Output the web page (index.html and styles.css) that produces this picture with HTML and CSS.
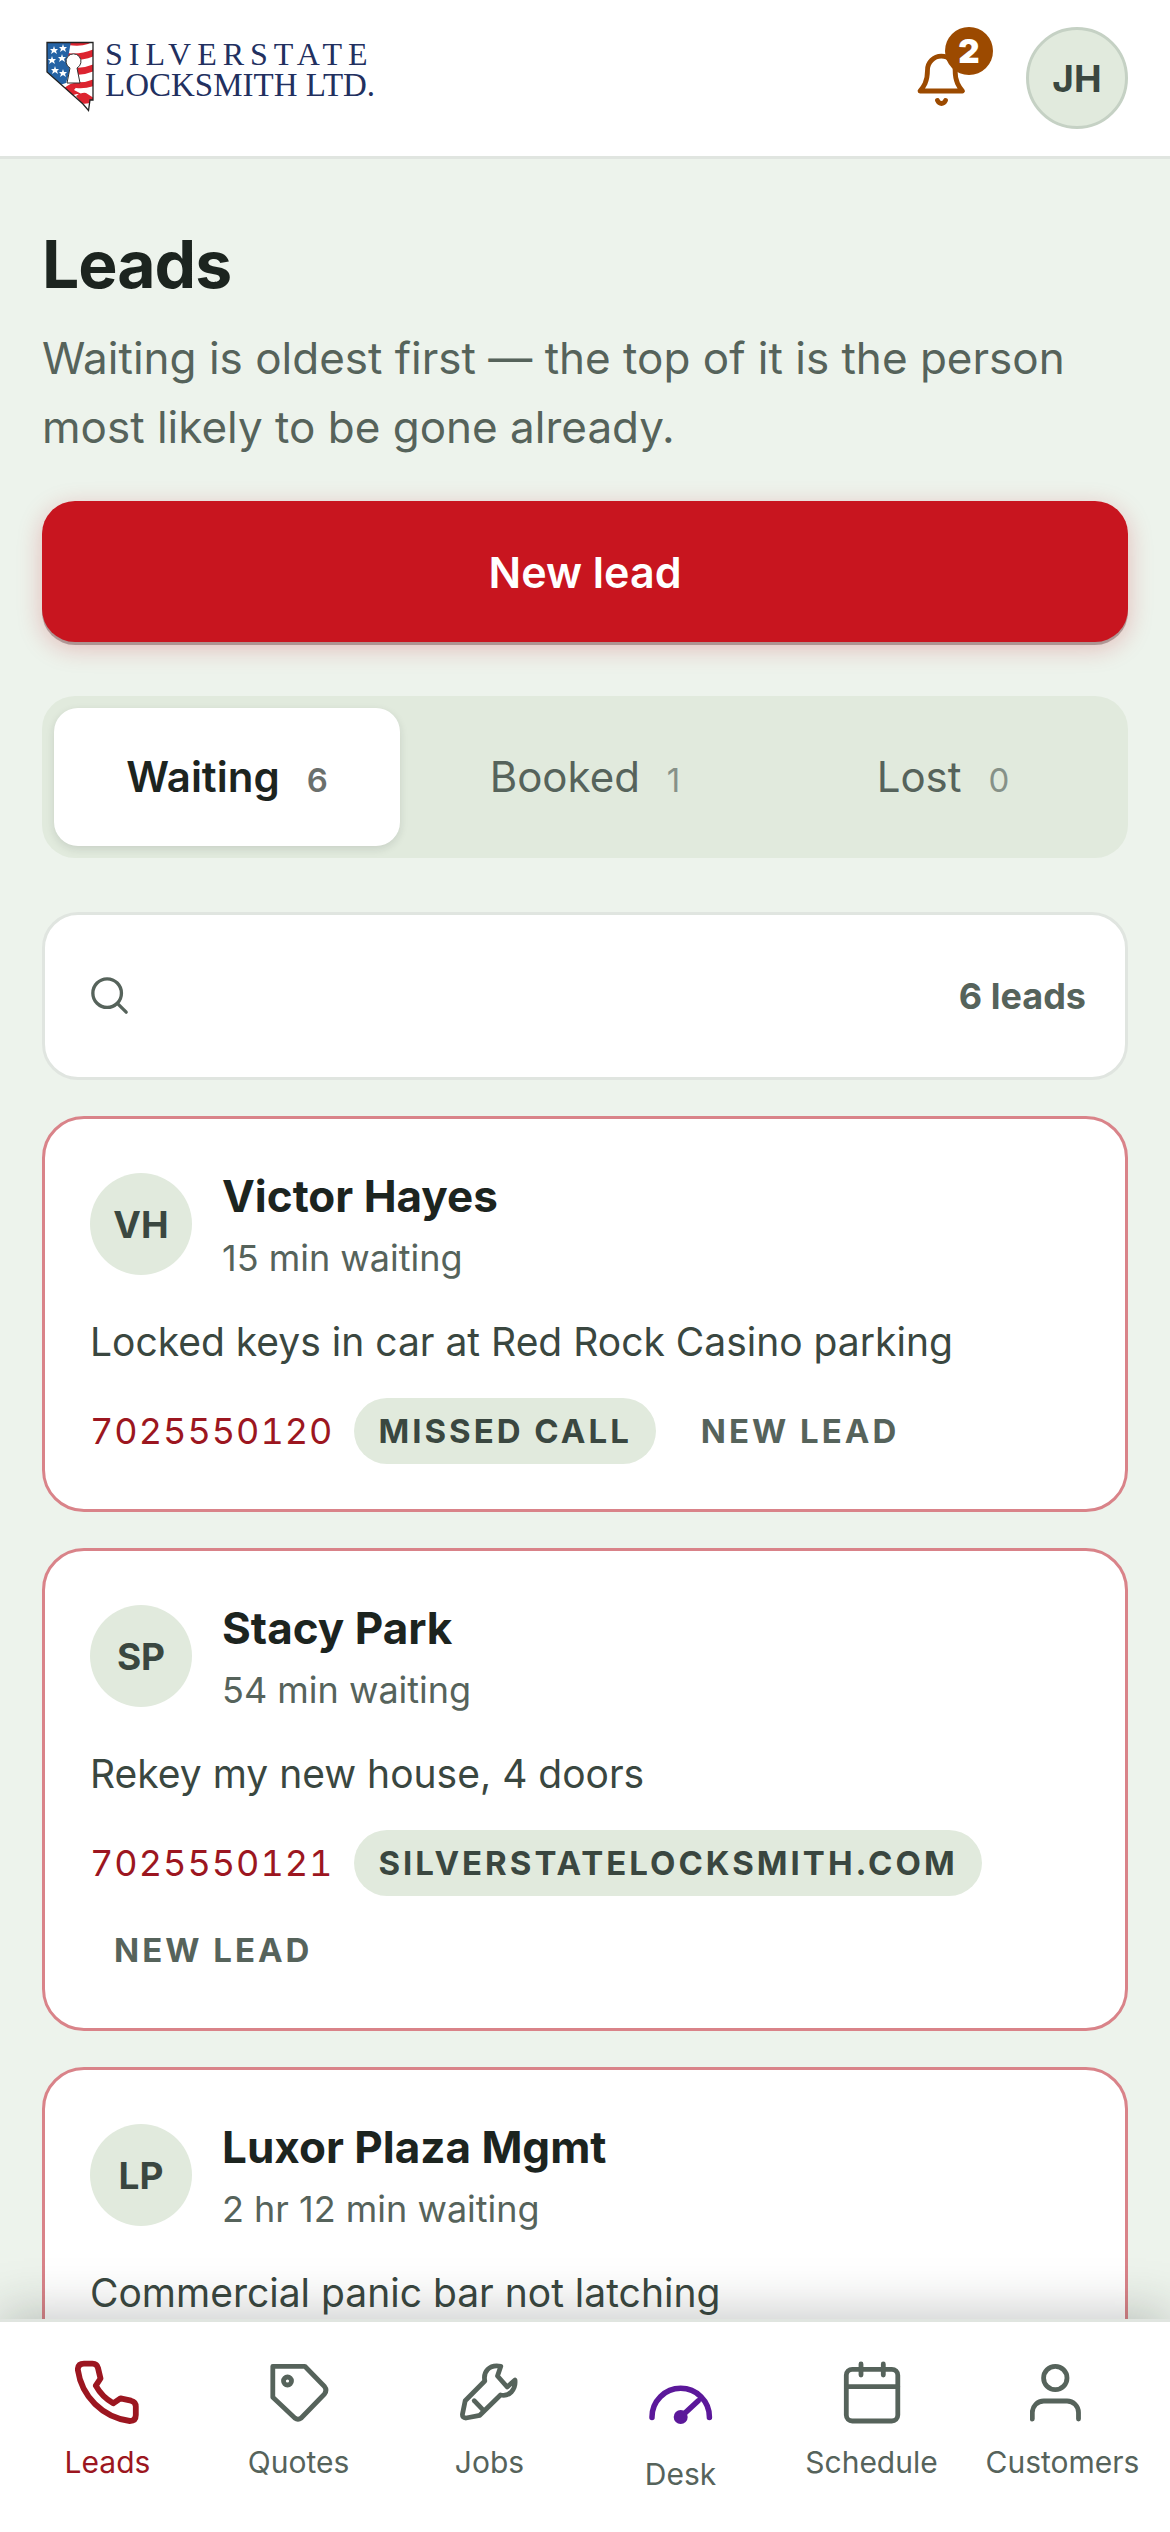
FILE: index.html
```html
<!DOCTYPE html>
<html lang="en">
<head>
  <meta charset="UTF-8">
  <meta name="viewport" content="width=device-width, initial-scale=1.0">
  <title>Leads</title>
  <link rel="stylesheet" href="styles.css">
</head>
<body>
  <header class="topbar">
    <a href="#" class="brand" aria-label="Silverstate Locksmith Ltd.">
      <svg class="brand-logo" viewBox="0 0 340 84">
        <defs>
          <clipPath id="state">
            <path d="M5 6.500H51V64H48L46.500 74.500L41 68L5 36Z"/>
          </clipPath>
        </defs>
        <g clip-path="url(#state)">
          <path fill="#fff" d="M0 0h60v80H0z"/>
          <path fill="#dc2430" d="M28 6h22l-4 2q-8 3-20 1zM26 17q12 2 26-4v7q-12 5-26 4zM34 32q9 0 18-4v7q-9 4-18 4zM34 46q9 1 18-3v7q-9 3-18 2zM21 53q10-8 17-6l-6 7 19 10v3l-9-2q-2-7-7-7l-8 2zM34 60q6-4 10-3l8 5v3q-8 4-13 2z"/>
          <path fill="#2563a5" d="M4 5h25l-2 12-2 7 3 10-4 13-6 2L4 36z"/>
          <g fill="#fff">
            <path d="M12 10l1 3 3 0-2 2 1 3-3-2-3 2 1-3-2-2 3 0z"/>
            <path d="M21 8l1 3 3 0-2 2 1 3-3-2-3 2 1-3-2-2 3 0z"/>
            <path d="M10 20l1 3 3 0-2 2 1 3-3-2-3 2 1-3-2-2 3 0z"/>
            <path d="M20 18l1 3 3 0-2 2 1 3-3-2-3 2 1-3-2-2 3 0z"/>
            <path d="M13 30l1 3 3 0-2 2 1 3-3-2-3 2 1-3-2-2 3 0z"/>
            <path d="M21 33l1 3 3 0-2 2 1 3-3-2-3 2 1-3-2-2 3 0z"/>
          </g>
        </g>
        <path fill="#fff" stroke="#333" d="M28 32a7.500 7.500 0 1 1 7 0L38 47H25Z"/>
        <path fill="none" stroke="#222" stroke-width="1.300" d="M5 6.500H51V64H48L46.500 74.500L41 68L5 36Z"/>
        <text class="logo-line logo-wide" x="63" y="29">SILVERSTATE</text>
        <text class="logo-line" x="63" y="60">LOCKSMITH LTD.</text>
      </svg>
    </a>
    <div class="topbar-actions">
      <button class="bell" aria-label="Notifications">
        <svg class="icon" viewBox="0 0 66 66">
          <path d="M19.500 25a13.800 13.800 0 0 1 27.600 0c0 12 4 17 7.400 21H12c3.500-4 7.500-9 7.500-21z"/>
          <path d="M29.500 55.500c2 4 6 4 8 0"/>
        </svg>
        <span class="bell-count">2</span>
      </button>
      <button class="avatar avatar-me">JH</button>
    </div>
  </header>

  <main class="content">
    <h1>Leads</h1>
    <p class="lede">Waiting is oldest first — the top of it is the person most likely to be gone already.</p>
    <button class="new-lead">New lead</button>

    <div class="tabs" role="tablist">
      <button class="tab active" role="tab" aria-selected="true">Waiting <span class="count">6</span></button>
      <button class="tab" role="tab">Booked <span class="count">1</span></button>
      <button class="tab" role="tab">Lost <span class="count">0</span></button>
    </div>

    <label class="search">
      <svg class="search-icon" viewBox="0 0 42 42">
        <circle cx="18" cy="18" r="15"/>
        <path d="M29 29l9 9"/>
      </svg>
      <input type="search" aria-label="Search leads">
      <span class="search-total">6 leads</span>
    </label>

    <article class="card">
      <div class="card-head">
        <span class="avatar">VH</span>
        <div>
          <h2>Victor Hayes</h2>
          <p class="waiting">15 min waiting</p>
        </div>
      </div>
      <p class="message">Locked keys in car at Red Rock Casino parking</p>
      <div class="meta">
        <a class="phone" href="tel:7025550120">7025550120</a>
        <span class="pill">Missed call</span>
        <span class="pill pill-plain">New lead</span>
      </div>
    </article>

    <article class="card">
      <div class="card-head">
        <span class="avatar">SP</span>
        <div>
          <h2>Stacy Park</h2>
          <p class="waiting">54 min waiting</p>
        </div>
      </div>
      <p class="message">Rekey my new house, 4 doors</p>
      <div class="meta">
        <a class="phone" href="tel:7025550121">7025550121</a>
        <span class="pill">silverstatelocksmith.com</span>
        <span class="pill pill-plain">New lead</span>
      </div>
    </article>

    <article class="card">
      <div class="card-head">
        <span class="avatar">LP</span>
        <div>
          <h2>Luxor Plaza Mgmt</h2>
          <p class="waiting">2 hr 12 min waiting</p>
        </div>
      </div>
      <p class="message">Commercial panic bar not latching</p>
    </article>
  </main>

  <nav class="bottom-nav">
    <a href="#" class="nav-item current">
      <svg class="icon" viewBox="0 0 66 66">
        <path d="M9 3.700H17.500Q22 3.700 23 8L25.500 18.500L20.800 25.700Q27 37 38.200 43.300L45.500 38.300L56 40.700Q60.800 42 60.800 46.500V55Q60.800 61 54.800 61A60 60 0 0 1 2.800 9.700Q3 3.700 9 3.700Z"/>
      </svg>
      Leads
    </a>
    <a href="#" class="nav-item">
      <svg class="icon" viewBox="0 0 66 66">
        <path d="M6.800 6.300H38.800L58.500 26.500Q61.500 30.300 58.500 34L35.200 58Q32 60.500 28.800 58L6.800 37.300Z"/>
        <circle cx="21.500" cy="21" r="4"/>
      </svg>
      Quotes
    </a>
    <a href="#" class="nav-item">
      <svg class="icon" viewBox="0 0 66 66">
        <path d="M27.800 21C26 12 32 4 43.800 6.300L40.500 16L50.200 27L58 20C59 30 52 37 43.500 35L22.800 55.300L9 58Q5 58 5.500 54L8.200 40.700Z"/>
        <path d="M17.200 40.700L25.500 49.300"/>
      </svg>
      Jobs
    </a>
    <a href="#" class="nav-item">
      <svg class="icon icon-desk" viewBox="0 0 78 78">
        <path d="M10 57.500V57a28.700 28.700 0 0 1 57.400 0v.5M38.700 57L56 41"/>
        <circle class="hub" cx="38.700" cy="57" r="7"/>
      </svg>
      Desk
    </a>
    <a href="#" class="nav-item">
      <svg class="icon" viewBox="0 0 66 66">
        <rect x="7.300" y="9.300" width="51.500" height="51.700" rx="6"/>
        <path d="M7.300 26.700H58.800M22 4V15M44.300 4V15"/>
      </svg>
      Schedule
    </a>
    <a href="#" class="nav-item">
      <svg class="icon" viewBox="0 0 66 66">
        <circle cx="25.300" cy="18" r="11.700"/>
        <path d="M2.300 59V52.500a11.500 11.500 0 0 1 11.500-11.500H37a11.500 11.500 0 0 1 11.500 11.500V59"/>
      </svg>
      Customers
    </a>
  </nav>
</body>
</html>
```
FILE: styles.css
```css
* {
  box-sizing: border-box;
}

body {
  margin: 0;
  height: 100vh;
  display: flex;
  flex-direction: column;
  font-family: Inter, "Liberation Sans", sans-serif;
  background-color: #edf3ec;
  color: #1c241f;
}

h1, h2, p {
  margin: 0;
}

button, input {
  font: inherit;
  color: inherit;
  border: none;
  padding: 0;
}

button {
  cursor: pointer;
}

a {
  text-decoration: none;
}

/* Header */
.topbar {
  flex: none;
  display: flex;
  justify-content: space-between;
  align-items: center;
  padding: 27px 42px;
  background-color: #fff;
  border-bottom: 3px solid #e0e5e0;
}

.brand-logo {
  display: block;
  width: 340px;
  height: 84px;
}

.logo-line {
  font-family: "Liberation Serif", serif;
  font-size: 33px;
  fill: #22305f;
}

.logo-wide {
  font-size: 32px;
  letter-spacing: 6px;
}

.topbar-actions {
  display: flex;
  align-items: center;
  gap: 33px;
}

.bell {
  position: relative;
  display: flex;
  align-items: center;
  justify-content: center;
  width: 105px;
  height: 102px;
  background: none;
  color: #9c4a00;
}

.bell-count {
  position: absolute;
  top: 0;
  right: 0;
  width: 48px;
  height: 48px;
  border-radius: 50%;
  background-color: #9c4a00;
  color: #fff;
  font-size: 33px;
  font-weight: 900;
  line-height: 48px;
}

.icon {
  width: 66px;
  height: 66px;
  fill: none;
  stroke: currentColor;
  stroke-width: 4.8;
  stroke-linecap: round;
  stroke-linejoin: round;
}

.avatar {
  flex: none;
  display: flex;
  align-items: center;
  justify-content: center;
  width: 102px;
  height: 102px;
  border-radius: 50%;
  background-color: #e1eadd;
  color: #3a4740;
  font-size: 37px;
  font-weight: 700;
}

.avatar-me {
  border: 3px solid #c5d1c4;
}

/* Page */
.content {
  flex: 1;
  min-height: 0;
  overflow-y: auto;
  scrollbar-width: none;
  padding: 66px 42px 0;
}

h1 {
  font-size: 66px;
  font-weight: 700;
  line-height: 78px;
  letter-spacing: -1px;
}

.lede {
  margin-top: 21px;
  font-size: 44px;
  line-height: 69px;
  color: #56635b;
}

.new-lead {
  display: block;
  width: 100%;
  height: 141px;
  margin-top: 39px;
  border-radius: 33px;
  background-color: #c8151f;
  color: #fff;
  font-size: 43px;
  font-weight: 600;
  box-shadow: 0 3px 0 rgba(90, 60, 60, 0.4), 0 6px 24px rgba(200, 21, 31, 0.25);
}

.tabs {
  display: grid;
  grid-template-columns: repeat(3, 1fr);
  gap: 12px;
  margin-top: 54px;
  padding: 12px;
  border-radius: 33px;
  background-color: #e1eadd;
}

.tab {
  display: flex;
  align-items: baseline;
  justify-content: center;
  gap: 27px;
  padding: 42px 0;
  border-radius: 24px;
  background: none;
  color: #56635b;
  font-size: 42px;
  line-height: 54px;
}

.tab.active {
  background-color: #fff;
  color: #1c241f;
  font-weight: 600;
  box-shadow: 0 3px 9px rgba(28, 36, 31, 0.12);
}

.count {
  font-size: 33px;
  line-height: 36px;
  opacity: 0.65;
}

.search {
  display: flex;
  align-items: center;
  gap: 24px;
  height: 168px;
  margin-top: 54px;
  padding: 0 39px 0 45px;
  border: 3px solid #e0e5e0;
  border-radius: 36px;
  background-color: #fff;
}

.search-icon {
  flex: none;
  width: 40px;
  height: 40px;
  fill: none;
  stroke: #56635b;
  stroke-width: 3.5;
  stroke-linecap: round;
}

.search input {
  flex: 1;
  min-width: 0;
  font-size: 42px;
  background: none;
  outline: none;
}

.search-total {
  color: #56635b;
  font-size: 36px;
  font-weight: 700;
}

/* Lead cards */
.card {
  margin-top: 36px;
  padding: 45px;
  border: 3px solid #d98389;
  border-radius: 42px;
  background-color: #fff;
}

.card-head {
  display: flex;
  align-items: center;
  gap: 30px;
}

h2 {
  font-size: 44px;
  font-weight: 700;
  line-height: 64px;
}

.waiting {
  margin-top: 4px;
  font-size: 36px;
  line-height: 52px;
  color: #56635b;
}

.message {
  margin-top: 24px;
  font-size: 39px;
  line-height: 68px;
  color: #3a4740;
}

.meta {
  display: flex;
  flex-wrap: wrap;
  align-items: center;
  gap: 21px;
  margin-top: 22px;
}

.phone {
  font-size: 36px;
  font-variant-numeric: tabular-nums;
  letter-spacing: 1px;
  color: #9c1620;
}

.pill {
  padding: 9px 24px;
  border-radius: 33px;
  background-color: #e1eadd;
  color: #3a4740;
  font-size: 33px;
  font-weight: 700;
  line-height: 48px;
  letter-spacing: 3px;
  text-transform: uppercase;
}

.pill-plain {
  background: none;
  color: #56635b;
}

/* Bottom navigation */
.bottom-nav {
  position: relative;
  flex: none;
  display: grid;
  grid-template-columns: repeat(6, 1fr);
  height: 213px;
  padding: 38px 12px 0;
  border-top: 3px solid #e0e5e0;
  background-color: #fff;
  box-shadow: 0 -6px 48px rgba(28, 36, 31, 0.25);
}

.nav-item {
  display: flex;
  flex-direction: column;
  align-items: center;
  gap: 15px;
  color: #56635b;
  font-size: 30px;
  line-height: 42px;
}

.nav-item.current {
  color: #9c1620;
}

.nav-item.current .icon {
  stroke-width: 5.8;
}

.icon-desk {
  width: 78px;
  height: 78px;
  color: #5b189a;
  stroke-width: 5.5;
}

.hub {
  fill: currentColor;
  stroke: none;
}
```
